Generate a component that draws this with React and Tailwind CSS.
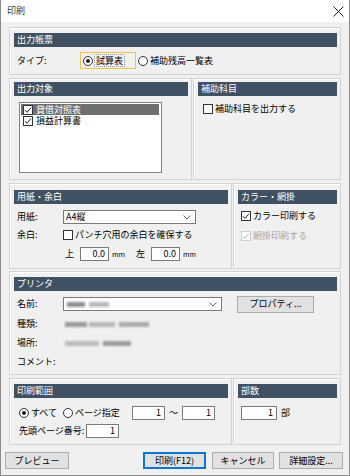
import React from 'react';

function Header({ children }) {
  return (
    <div className="h-[14px] bg-[#405163] pl-[3px] text-[9px] leading-[14px] text-white">{children}</div>
  );
}

function Panel({ title, className = '', children }) {
  return (
    <div className={`border border-[#d3d3d3] pl-[4px] pr-[3px] shadow-[inset_1px_1px_0_#ffffff] ${className}`}>
      <Header>{title}</Header>
      {children}
    </div>
  );
}

function Check({ checked, disabled }) {
  return (
    <span
      className={`flex h-[10px] w-[10px] shrink-0 items-center justify-center border bg-white ${
        disabled ? 'border-[#cfcfcf]' : 'border-[#333333]'
      }`}
    >
      {checked && (
        <svg width="8" height="8" viewBox="0 0 8 8">
          <path d="M1 4.2 L3 6.3 L7 1.6" fill="none" stroke={disabled ? '#b4b4b4' : '#222222'} strokeWidth="1" />
        </svg>
      )}
    </span>
  );
}

function Radio({ checked }) {
  return (
    <span className="flex h-[10px] w-[10px] shrink-0 items-center justify-center rounded-full border border-[#333333] bg-white">
      {checked && <span className="h-[4px] w-[4px] rounded-full bg-[#222222]" />}
    </span>
  );
}

function NumBox({ value, className = '' }) {
  return (
    <div className={`h-[14px] border border-[#7a7a7a] bg-white pr-[3px] text-right text-[9px] leading-[12px] ${className}`}>
      {value}
    </div>
  );
}

function Chevron() {
  return (
    <svg width="8" height="5" viewBox="0 0 8 5">
      <path d="M0.5 0.5 L4 4 L7.5 0.5" fill="none" stroke="#666666" strokeWidth="1" />
    </svg>
  );
}

function Select({ className = '', children }) {
  return (
    <div className={`flex h-[14px] items-center justify-between border border-[#7a7a7a] bg-white pl-[2px] pr-[4px] ${className}`}>
      <div className="flex items-center">{children}</div>
      <Chevron />
    </div>
  );
}

function Btn({ children, className = '' }) {
  return (
    <div className={`flex h-[17px] items-center justify-center border bg-[#e1e1e1] text-[9px] ${className}`}>
      {children}
    </div>
  );
}

function Blur({ className = '' }) {
  return <span className={`h-[5px] blur-[0.8px] ${className}`} />;
}

export default function App() {
  return (
    <div className="flex h-[476px] w-[350px] flex-col border-x border-b border-[#8c8c8c] bg-[#f0f0f0] font-['Noto_Sans_CJK_JP','Noto_Sans',sans-serif] text-[9px] leading-[12px] text-black">
      {/* title bar */}
      <div className="flex h-[22px] shrink-0 items-center justify-between bg-white pl-[6px] pr-[5px]">
        <span className="text-[9px] text-[#333333]">印刷</span>
        <svg width="11" height="11" viewBox="0 0 11 11">
          <path d="M0.5 0.5 L10.5 10.5 M10.5 0.5 L0.5 10.5" stroke="#222222" strokeWidth="1" />
        </svg>
      </div>

      <div className="flex flex-col px-[8px] pt-[5px]">
        {/* 出力帳票 */}
        <Panel title="出力帳票" className="h-[48px] pt-[5px]">
          <div className="mt-[5px] flex h-[17px] items-center">
            <span className="w-[66px] pl-[3px]">タイプ:</span>
            <div className="flex h-[17px] w-[56px] items-center border border-[#f3c24a] pl-[2px]">
              <Radio checked />
              <span className="ml-[1px] border border-dotted border-[#9a9a9a] px-[1px] leading-[11px]">試算表</span>
            </div>
            <div className="ml-[2px] flex items-center">
              <Radio />
              <span className="ml-[2px]">補助残高一覧表</span>
            </div>
          </div>
        </Panel>

        {/* 出力対象 / 補助科目 */}
        <div className="mt-[3px] grid h-[102px] grid-cols-[183px_148px] gap-x-[1px]">
          <Panel title="出力対象" className="pt-[3px]">
            <div className="ml-[5px] mt-[6px] h-[71px] w-[143px] border border-[#828282] bg-white p-[1px] pr-[2px]">
              <div className="flex h-[11px] items-center gap-[3px] bg-[#6f6f6f] pl-[2px] text-white">
                <Check checked />
                <span>貸借対照表</span>
              </div>
              <div className="flex h-[12px] items-center gap-[3px] pl-[2px]">
                <Check checked />
                <span>損益計算書</span>
              </div>
            </div>
          </Panel>
          <Panel title="補助科目" className="pt-[3px]">
            <div className="ml-[5px] mt-[7px] flex h-[12px] items-center gap-[2px]">
              <Check />
              <span>補助科目を出力する</span>
            </div>
          </Panel>
        </div>

        {/* 用紙・余白 / カラー・網掛 */}
        <div className="mt-[3px] grid h-[86px] grid-cols-[223px_108px] gap-x-[1px]">
          <Panel title="用紙・余白" className="pt-[6px]">
            <div className="mt-[6px] flex h-[14px] items-center">
              <span className="w-[49px] pl-[3px]">用紙:</span>
              <Select className="w-[133px]">A4縦</Select>
            </div>
            <div className="mt-[4px] flex h-[14px] items-center">
              <span className="w-[49px] pl-[3px]">余白:</span>
              <Check />
              <span className="ml-[2px]">パンチ穴用の余白を確保する</span>
            </div>
            <div className="mt-[5px] flex h-[14px] items-center">
              <span className="w-[51px]" />
              <span className="w-[9px]">上</span>
              <NumBox value="0.0" className="ml-[6px] w-[29px]" />
              <span className="ml-[3px] w-[24px] text-[7px]">mm</span>
              <span className="w-[9px]">左</span>
              <NumBox value="0.0" className="ml-[6px] w-[29px]" />
              <span className="ml-[3px] text-[7px]">mm</span>
            </div>
          </Panel>
          <Panel title="カラー・網掛" className="pt-[6px]">
            <div className="ml-[3px] mt-[6px] flex h-[12px] items-center gap-[2px]">
              <Check checked />
              <span>カラー印刷する</span>
            </div>
            <div className="ml-[3px] mt-[8px] flex h-[12px] items-center gap-[2px] text-[#a6a6a6]">
              <Check checked disabled />
              <span>網掛印刷する</span>
            </div>
          </Panel>
        </div>

        {/* プリンタ */}
        <Panel title="プリンタ" className="mt-[2px] h-[104px] pt-[5px]">
          <div className="mt-[5px] flex h-[16px] items-center">
            <span className="w-[49px] pl-[3px]">名前:</span>
            <Select className="w-[159px]">
              <Blur className="ml-[1px] w-[18px] bg-[#8e8e8e]" />
              <Blur className="ml-[4px] w-[20px] bg-[#b8b8b8]" />
            </Select>
            <Btn className="ml-[15px] h-[15px] w-[77px] border-[#adadad]">プロパティ...</Btn>
          </div>
          <div className="mt-[5px] flex h-[14px] items-center">
            <span className="w-[51px] pl-[3px]">種類:</span>
            <Blur className="w-[22px] bg-[#9a9a9a]" />
            <Blur className="ml-[2px] w-[26px] bg-[#b8b8b8]" />
            <Blur className="ml-[4px] w-[30px] bg-[#aaaaaa]" />
          </div>
          <div className="mt-[5px] flex h-[14px] items-center">
            <span className="w-[51px] pl-[3px]">場所:</span>
            <Blur className="w-[34px] bg-[#bcbcbc]" />
            <Blur className="ml-[4px] w-[28px] bg-[#9c9c9c]" />
          </div>
          <div className="mt-[5px] flex h-[14px] items-center">
            <span className="pl-[3px]">コメント:</span>
          </div>
        </Panel>

        {/* 印刷範囲 / 部数 */}
        <div className="mt-[3px] grid h-[67px] grid-cols-[223px_108px] gap-x-[1px]">
          <Panel title="印刷範囲" className="pt-[5px]">
            <div className="mt-[8px] flex h-[14px] items-center pl-[5px]">
              <div className="flex w-[44px] items-center">
                <Radio checked />
                <span className="ml-[2px]">すべて</span>
              </div>
              <div className="flex w-[69px] items-center">
                <Radio />
                <span className="ml-[2px]">ページ指定</span>
              </div>
              <NumBox value="1" className="w-[33px]" />
              <span className="w-[17px] text-center">～</span>
              <NumBox value="1" className="w-[33px]" />
            </div>
            <div className="mt-[4px] flex h-[14px] items-center">
              <span className="w-[72px] pl-[5px]">先頭ページ番号:</span>
              <NumBox value="1" className="w-[33px]" />
            </div>
          </Panel>
          <Panel title="部数" className="pt-[5px]">
            <div className="ml-[3px] mt-[8px] flex h-[14px] items-center">
              <NumBox value="1" className="w-[36px]" />
              <span className="ml-[4px]">部</span>
            </div>
          </Panel>
        </div>
      </div>

      {/* buttons */}
      <div className="mt-[7px] flex pl-[4px]">
        <Btn className="w-[64px] border-[#adadad]">プレビュー</Btn>
        <Btn className="ml-[74px] w-[63px] border-[#0078d7] shadow-[inset_0_0_0_1px_#0078d7]">印刷(F12)</Btn>
        <Btn className="ml-[6px] w-[62px] border-[#adadad]">キャンセル</Btn>
        <Btn className="ml-[5px] w-[64px] border-[#adadad]">詳細設定...</Btn>
      </div>
    </div>
  );
}
